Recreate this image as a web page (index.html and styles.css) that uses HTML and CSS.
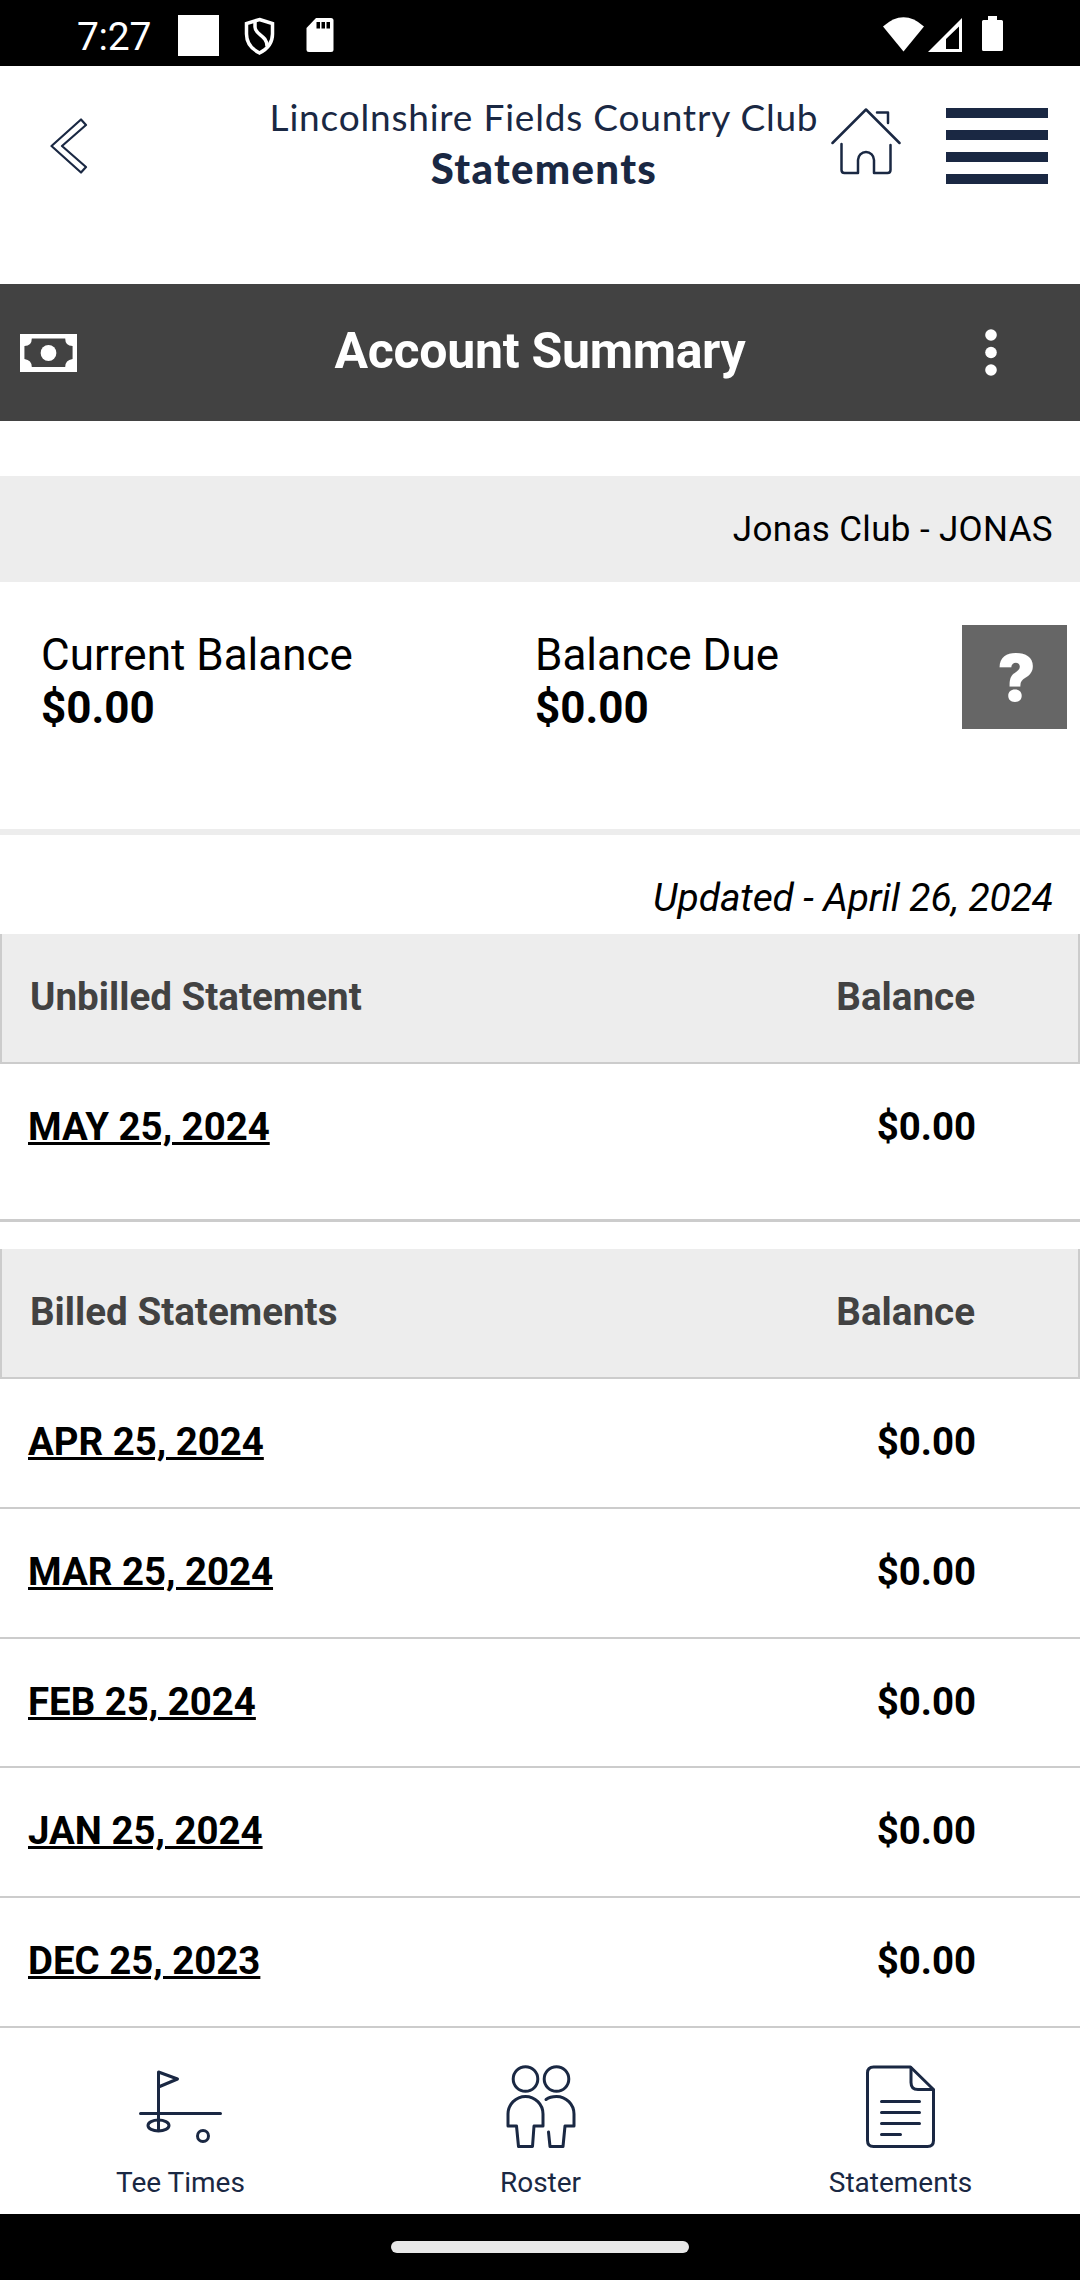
FILE: index.html
```
<!DOCTYPE html>
<html lang="en">
<head>
    <meta charset="UTF-8">
    <meta name="viewport" content="width=device-width, initial-scale=1.0">
    <title>Statements</title>
    <link rel="stylesheet" href="styles.css">
</head>
<body>

<!-- Status bar -->
<div class="status-bar">
    <span class="clock">7:27</span>
    <span class="status-square"></span>
    <svg class="status-shield" width="32" height="38" viewBox="0 0 32 38">
        <path d="M15.500 2.500L28.500 6.500V17C28.500 26 23.500 32 15.500 36C7.500 32 2.500 26 2.500 17V6.500Z"/>
        <path d="M11 4.500V10C11 18 23 18 23 29"/>
    </svg>
    <svg class="status-sd" width="28" height="36" viewBox="0 0 28 36">
        <path d="M10 1H25Q27.500 1 27.500 3.500V32.500Q27.500 35 25 35H3Q.500 35 .500 32.500V11Z"/>
        <path class="slots" d="M10.500 5h3.500v6.500h-3.500zM15.500 5h3.500v6.500h-3.500zM20.500 5h3.500v6.500h-3.500z"/>
    </svg>
    <svg class="status-right" width="124" height="40" viewBox="0 0 124 40">
        <path d="M0 11.500Q20.500 -7 41 11.500L20.500 36.500Z"/>
        <path fill-rule="evenodd" d="M79 3V37H45ZM76 11.500L63 24V34H76Z"/>
        <path d="M105 1h9v4h4.500q1.500 0 1.500 1.500v28q0 1.500-1.500 1.500h-18q-1.500 0-1.500-1.500v-28q0-1.500 1.500-1.500h4.500z"/>
    </svg>
</div>

<!-- App header -->
<header class="app-header">
    <svg class="back-icon" width="40" height="56" viewBox="0 0 40 56">
        <path d="M31 1.500L1.500 28L31 54.500L36 49L12 28L36 7Z"/>
    </svg>
    <div class="app-title">
        <div class="club-name">Lincolnshire Fields Country Club</div>
        <div class="page-name">Statements</div>
    </div>
    <svg class="home-icon" width="70" height="68" viewBox="0 0 70 68">
        <path d="M1.500 35L35 1.500L68.500 35"/>
        <path d="M46 4.500H57V15"/>
        <path d="M10.500 36V62Q10.500 65 13.500 65H27V52A7.700 7.700 0 0 1 43 52V65H56.500Q59.500 65 59.500 62V37"/>
    </svg>
    <div class="menu-icon">
        <span></span><span></span><span></span><span></span>
    </div>
</header>

<!-- Section title -->
<div class="section-bar">
    <svg class="money-icon" width="57" height="38" viewBox="0 0 58 38" preserveAspectRatio="none">
        <path fill-rule="evenodd" d="M0 0H58V38H0ZM12 4.500Q12 12 4.500 12V25Q12 26 12 33H46Q46 26 53.500 25V12Q46 12 46 4.500Z"/>
        <circle cx="29" cy="19" r="8"/>
    </svg>
    <h1>Account Summary</h1>
    <svg class="more-icon" width="12" height="48" viewBox="0 0 12 48">
        <circle cx="6" cy="6" r="5.800"/>
        <circle cx="6" cy="23.500" r="5.800"/>
        <circle cx="6" cy="41" r="5.800"/>
    </svg>
</div>

<main>
    <div class="member-bar">Jonas Club - JONAS</div>

    <div class="balances">
        <div class="balance">
            <div>Current Balance</div>
            <strong>$0.00</strong>
        </div>
        <div class="balance">
            <div>Balance Due</div>
            <strong>$0.00</strong>
        </div>
        <button class="help-button">?</button>
    </div>

    <div class="updated">Updated - April 26, 2024</div>

    <div class="table-head"><span>Unbilled Statement</span><span>Balance</span></div>
    <div class="row unbilled"><a href="#">MAY 25, 2024</a><span>$0.00</span></div>

    <div class="table-head"><span>Billed Statements</span><span>Balance</span></div>
    <div class="row"><a href="#">APR 25, 2024</a><span>$0.00</span></div>
    <div class="row"><a href="#">MAR 25, 2024</a><span>$0.00</span></div>
    <div class="row"><a href="#">FEB 25, 2024</a><span>$0.00</span></div>
    <div class="row"><a href="#">JAN 25, 2024</a><span>$0.00</span></div>
    <div class="row"><a href="#">DEC 25, 2023</a><span>$0.00</span></div>
</main>

<!-- Bottom navigation -->
<nav class="bottom-nav">
    <a class="nav-item" href="#">
        <svg width="84" height="84" viewBox="0 0 84 84">
            <path d="M2.500 48.500H82.500M20.500 65V7L39.500 14L20.500 22"/>
            <ellipse cx="20.500" cy="60.500" rx="10.500" ry="5.500"/>
            <circle cx="65" cy="71" r="5.500"/>
        </svg>
        <span>Tee Times</span>
    </a>
    <a class="nav-item" href="#">
        <svg width="84" height="84" viewBox="0 0 84 84">
            <circle cx="27.500" cy="14" r="12.300"/>
            <circle cx="58.500" cy="14" r="12.300"/>
            <path d="M10 61V49A17.500 17.500 0 0 1 45 49V61H36L34.500 81.500H20.500L18.500 61Z"/>
            <path d="M48 34.500Q52 31.500 58.500 31.500A17.500 17.500 0 0 1 76 49V61H67L65 81.500H52L50.500 67"/>
        </svg>
        <span>Roster</span>
    </a>
    <a class="nav-item" href="#">
        <svg width="84" height="84" viewBox="0 0 84 84">
            <path d="M52.500 2H15.500Q9.500 2 9.500 8V75.500Q9.500 81.500 15.500 81.500H69.500Q75.500 81.500 75.500 75.500V24.500Z"/>
            <path d="M53 3V17.500Q53 24.500 60 24.500H75"/>
            <path d="M23.500 36.500H61.500M23.500 47.500H61.500M23.500 58.500H61.500M23.500 69.500H42.500"/>
        </svg>
        <span>Statements</span>
    </a>
</nav>

<div class="gesture-bar"><span></span></div>

</body>
</html>
```
FILE: styles.css
```
/* General reset */
* {
    margin: 0;
    padding: 0;
    box-sizing: border-box;
}

body {
    width: 1080px;
    height: 2280px;
    overflow: hidden;
    display: flex;
    flex-direction: column;
    font-family: 'Roboto', sans-serif;
    background-color: #fff;
    color: #000;
}

svg {
    display: block;
    flex: none;
}

/* Status bar */
.status-bar {
    flex: none;
    display: flex;
    align-items: flex-start;
    height: 66px;
    padding-left: 77px;
    background-color: #000;
    color: #fff;
}

.clock {
    width: 101px;
    margin-top: 4px;
    font-size: 39px;
    line-height: 66px;
    letter-spacing: -0.3px;
}

.status-square {
    width: 41px;
    height: 41px;
    margin-top: 15px;
    background-color: #fff;
}

.status-shield {
    margin: 17px 0 0 25px;
    fill: none;
    stroke: #fff;
    stroke-width: 3.5;
}

.status-sd {
    margin: 17px 0 0 30px;
    fill: #fff;
}

.slots {
    fill: #000;
}

.status-right {
    margin: 15px 73px 0 auto;
    fill: #fff;
}

/* App header */
.app-header {
    flex: none;
    display: flex;
    align-items: flex-start;
    height: 218px;
    padding: 0 32px 0 50px;
    color: #1a2843;
}

.back-icon {
    margin-top: 52px;
    fill: none;
    stroke: #1a2843;
    stroke-width: 2.2;
    stroke-linejoin: round;
}

.app-title {
    width: 560px;
    margin: 27px 0 0 174px;
    font-family: 'Lato', sans-serif;
    text-align: center;
}

.club-name {
    font-size: 37px;
    line-height: 48px;
    letter-spacing: 0.8px;
    white-space: nowrap;
}

.page-name {
    font-size: 42px;
    font-weight: 900;
    line-height: 54px;
    letter-spacing: 1.3px;
}

.home-icon {
    margin: 42px 0 0 7px;
    fill: none;
    stroke: #1a2843;
    stroke-width: 2.5;
    stroke-linecap: round;
    stroke-linejoin: round;
}

.menu-icon {
    display: flex;
    flex-direction: column;
    justify-content: space-between;
    width: 102px;
    height: 76px;
    margin: 42px 0 0 auto;
}

.menu-icon span {
    height: 10px;
    background-color: #1a2843;
}

/* Section title */
.section-bar {
    flex: none;
    display: flex;
    align-items: center;
    justify-content: space-between;
    height: 137px;
    padding: 0 83px 0 20px;
    background-color: #424242;
    color: #fff;
}

.section-bar h1 {
    margin: 0 0 3px 18px;
    font-size: 50px;
    line-height: 60px;
    letter-spacing: -0.3px;
}

.money-icon,
.more-icon {
    fill: #fff;
}

/* Account details */
main {
    flex: none;
    height: 1607px;
    padding-top: 55px;
}

.member-bar {
    height: 106px;
    padding-right: 27px;
    background-color: #ededed;
    font-size: 35px;
    line-height: 107px;
    letter-spacing: 0.35px;
    text-align: right;
}

.balances {
    display: flex;
    align-items: flex-start;
    height: 253px;
    padding: 43px 13px 0 41px;
    border-bottom: 6px solid #ededed;
}

.balance {
    width: 494px;
    margin-top: 4px;
    font-size: 44px;
    line-height: 53px;
}

.help-button {
    flex: none;
    width: 105px;
    height: 104px;
    padding-left: 4px;
    border: none;
    background-color: #666;
    color: #fff;
    font-family: 'Inter', sans-serif;
    font-size: 64px;
    font-weight: 900;
}

.balance + .help-button {
    margin-left: -67px;
}

.updated {
    height: 99px;
    padding: 38px 27px 0 0;
    font-size: 39px;
    font-style: italic;
    line-height: 50px;
    letter-spacing: -0.1px;
    text-align: right;
}

/* Statement tables */
.table-head,
.row {
    display: flex;
    justify-content: space-between;
    font-size: 38.4px;
    font-weight: 700;
}

.table-head {
    height: 130px;
    padding: 0 103px 0 28px;
    border: 2px solid #ccc;
    border-top: none;
    background-color: #ededed;
    color: #424242;
    font-size: 38.6px;
    line-height: 126px;
}

.row {
    height: 129.800px;
    padding: 0 104px 0 28px;
    border-bottom: 2px solid #ccc;
    line-height: 125px;
}

.row a {
    color: #000;
    text-decoration-thickness: 3px;
    text-underline-offset: 2px;
}

.row.unbilled {
    height: 158px;
    margin-bottom: 27px;
    border-bottom-width: 3px;
}

/* Bottom navigation */
.bottom-nav {
    flex: none;
    display: flex;
    height: 186px;
    padding-top: 37px;
}

.nav-item {
    flex: 1;
    display: flex;
    flex-direction: column;
    align-items: center;
    gap: 17px;
    color: #1a2843;
    font-size: 28px;
    line-height: 34px;
    text-decoration: none;
}

.nav-item span {
    padding-left: 1px;
}

.nav-item svg {
    fill: none;
    stroke: #1a2843;
    stroke-width: 3;
    stroke-linecap: round;
    stroke-linejoin: round;
}

.gesture-bar {
    flex: none;
    display: flex;
    justify-content: center;
    height: 66px;
    padding-top: 27px;
    background-color: #000;
}

.gesture-bar span {
    width: 298px;
    height: 12px;
    border-radius: 6px;
    background-color: #e8e8e8;
}
```
